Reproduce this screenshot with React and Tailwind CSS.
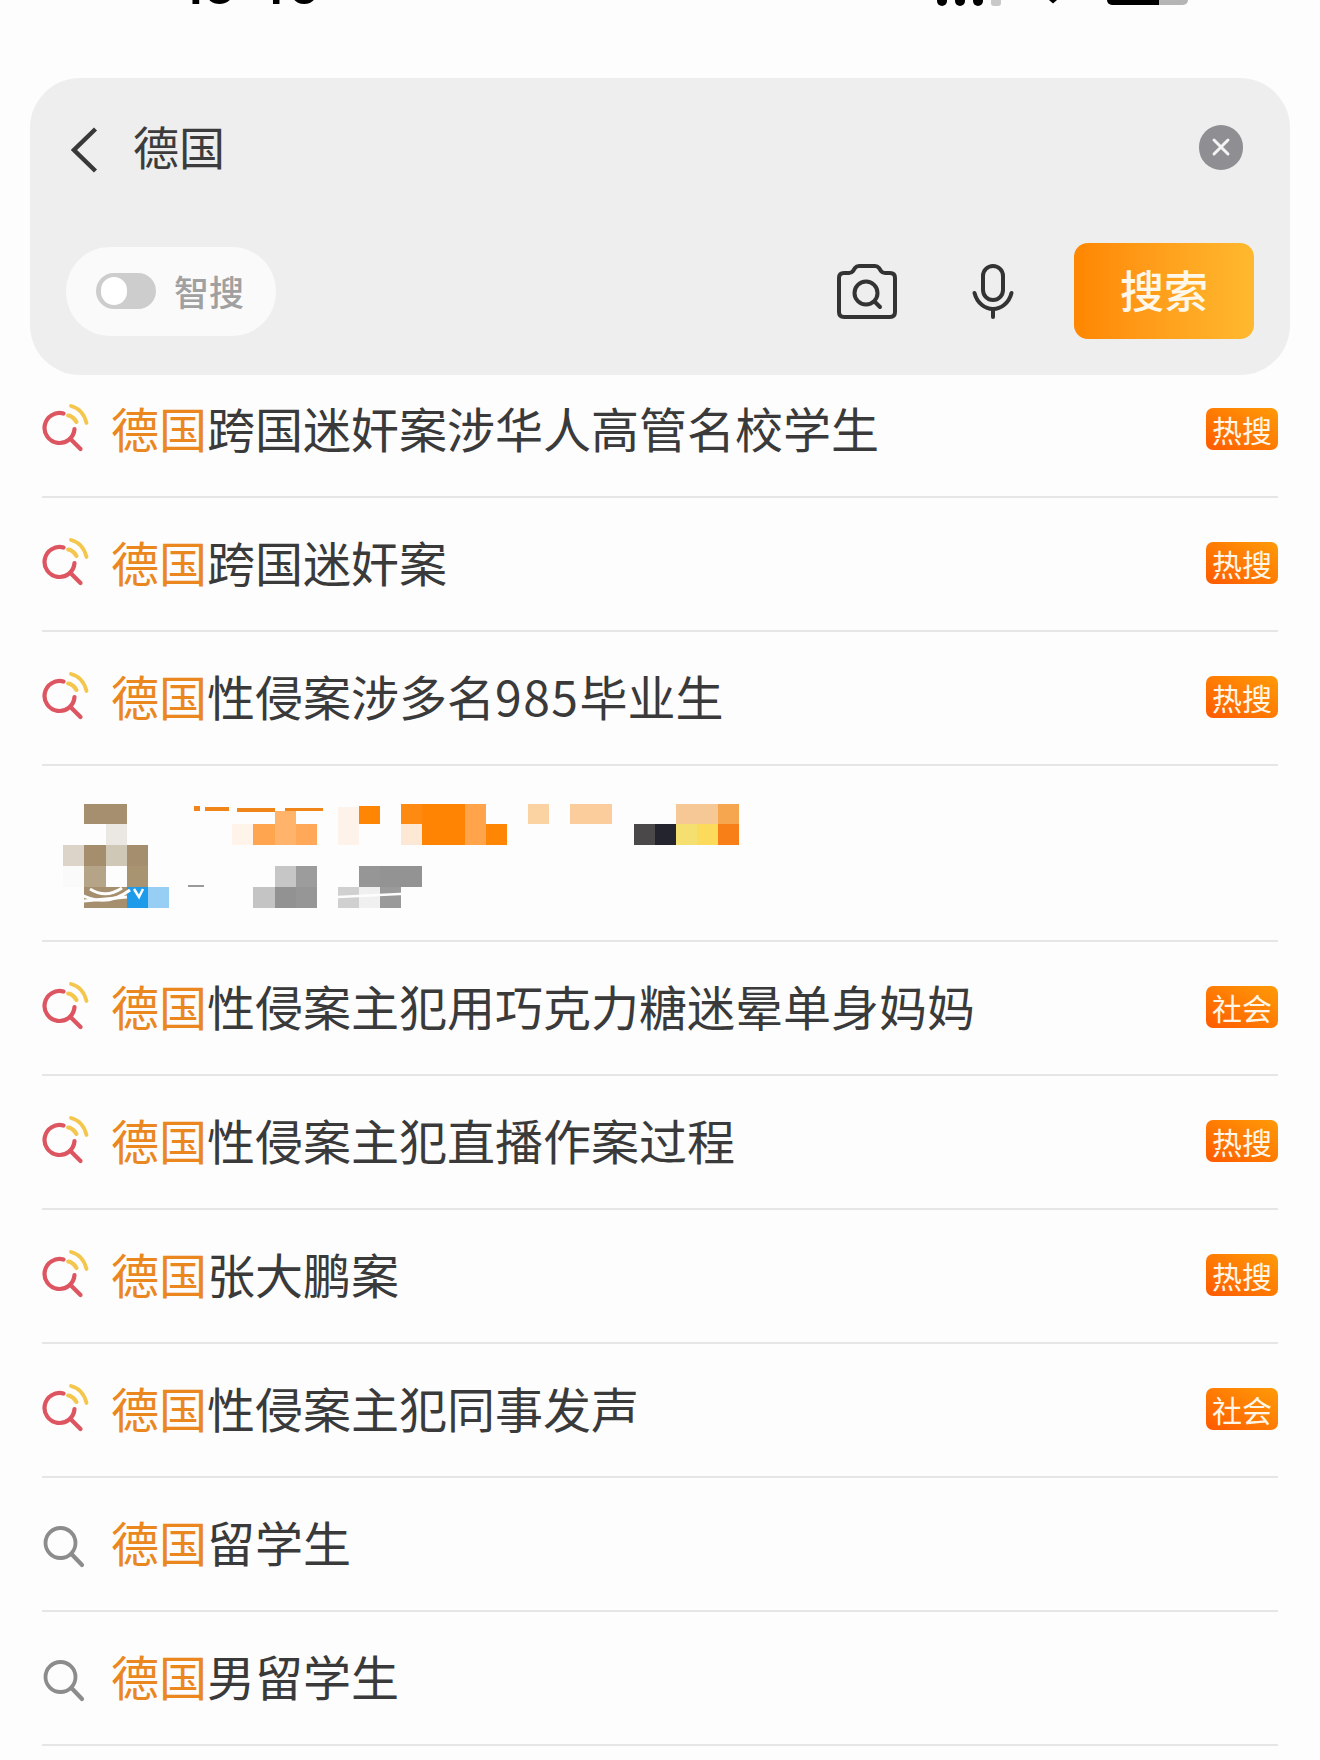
import React from "react";

const mosaic = [
  // avatar
  [84, 803, 43, 20, "#a58f6e"], [106, 823, 21, 21, "#ebe8e3"],
  [63, 844, 21, 21, "#dcd4c8"], [84, 844, 22, 21, "#a48e6e"], [106, 844, 21, 21, "#d0c8b6"], [127, 844, 21, 21, "#a48e6e"],
  [63, 865, 21, 21, "#fbfafa"], [84, 865, 22, 21, "#b5a488"], [127, 865, 21, 21, "#a99471"],
  [84, 886, 43, 21, "#a58f6e"], [127, 886, 21, 21, "#1d9bea"], [148, 886, 21, 21, "#96cff3"],
  // orange text residue
  [194, 805, 6, 5, "#f0861a"], [205, 806, 24, 4, "#f0861a"], [237, 807, 38, 4, "#f0861a"], [285, 807, 38, 3, "#f0861a"],
  [232, 823, 21, 21, "#fff3ea"], [253, 823, 22, 21, "#ffa44f"], [275, 810, 21, 34, "#ffb36b"], [296, 823, 21, 21, "#ffa858"],
  [338, 806, 21, 38, "#fdf3ea"], [359, 805, 21, 18, "#ff8504"],
  [401, 803, 21, 20, "#ff8a12"], [401, 823, 21, 21, "#fde7d5"], [422, 803, 43, 41, "#ff8404"],
  [465, 803, 21, 41, "#ffa44a"], [486, 823, 21, 21, "#ff8504"],
  [528, 803, 21, 20, "#fbd3a3"], [570, 803, 42, 20, "#fccd9c"],
  [634, 823, 21, 21, "#4a4848"], [655, 823, 21, 21, "#24242e"],
  [676, 803, 42, 20, "#f5c896"], [676, 823, 21, 21, "#f5df70"], [697, 823, 21, 21, "#fcda5c"],
  [718, 803, 21, 20, "#f6a64f"], [718, 823, 21, 21, "#f87f17"],
  // grey text
  [253, 886, 22, 21, "#c4c4c4"], [275, 865, 21, 21, "#c6c6c6"], [275, 886, 21, 21, "#929292"],
  [296, 865, 21, 21, "#9c9c9c"], [296, 886, 21, 21, "#969696"],
  [338, 886, 21, 21, "#d0d0d0"], [359, 865, 21, 21, "#969696"], [359, 886, 21, 21, "#f0f0f0"],
  [380, 865, 42, 21, "#939393"], [380, 886, 21, 21, "#9a9a9a"],
  [188, 884, 16, 2, "#9a9a9a"],
];

const rows = [
  { t: "跨国迷奸案涉华人高管名校学生", b: "热搜", first: true },
  { t: "跨国迷奸案", b: "热搜" },
  { t: <>性侵案涉多名<span className="tracking-[1.5px]">985</span>毕业生</>, b: "热搜" },
  { blur: true },
  { t: "性侵案主犯用巧克力糖迷晕单身妈妈", b: "社会" },
  { t: "性侵案主犯直播作案过程", b: "热搜" },
  { t: "张大鹏案", b: "热搜" },
  { t: "性侵案主犯同事发声", b: "社会" },
  { t: "留学生" },
  { t: "男留学生" },
];

function HotIcon() {
  return (
    <svg width="48" height="56" viewBox="0 0 48 56" fill="none" className="shrink-0">
      <path d="M27 13.5 Q33 15.5 35 21 L29 14 Z" fill="#fbe3b8" stroke="#fbe3b8" strokeWidth="4" />
      <path d="M21.5 11.5 A15 15 0 1 0 32.5 27" stroke="#dd5560" strokeWidth="4.2" strokeLinecap="round" />
      <path d="M28.5 37 L38.5 47" stroke="#dd5560" strokeWidth="4.2" strokeLinecap="round" />
      <path d="M29 4 Q41 7 44.5 21" stroke="#f4c64c" strokeWidth="3.8" strokeLinecap="round" />
      <path d="M26 13.5 Q31 14 34.5 20" stroke="#f4c64c" strokeWidth="3.8" strokeLinecap="round" />
    </svg>
  );
}

function GrayIcon() {
  return (
    <svg width="48" height="56" viewBox="0 0 48 56" fill="none" className="shrink-0">
      <circle cx="18.5" cy="27" r="15" stroke="#8c8c8c" strokeWidth="3.8" />
      <path d="M29.5 38 L40 49" stroke="#8c8c8c" strokeWidth="4.2" strokeLinecap="round" />
    </svg>
  );
}

function Badge({ label }) {
  return (
    <div className="mb-[2px] ml-auto flex h-[42px] w-[72px] items-center justify-center rounded-[7px] bg-gradient-to-tr from-[#ff5800] to-[#ff9a08] text-[30px] leading-none text-[#fff6e8]">
      {label}
    </div>
  );
}

function Row({ t, b, first }) {
  return (
    <div className={`flex items-center border-b-2 border-[#e6e6e6] ${first ? "h-[123px] pb-[12px]" : "h-[134px]"}`}>
      {b ? <HotIcon /> : <GrayIcon />}
      <div className="mb-[6px] ml-[21px] whitespace-nowrap text-[48px] leading-none text-[#3a3a3a]">
        <span className="text-[#ea871e]">德国</span>
        {t}
      </div>
      {b && <Badge label={b} />}
    </div>
  );
}

export default function App() {
  return (
    <div className="h-[1760px] w-[1320px] overflow-hidden bg-[#fdfdfd] font-['Noto_Sans_CJK_SC','Liberation_Sans',sans-serif]">
      {/* status bar, cut by the top edge */}
      <div className="flex h-[78px] items-start">
        <div className="ml-[181px] h-[6px] w-[153px] overflow-hidden">
          <div className="mt-[-40px] font-['Inter',sans-serif] text-[52px] font-semibold leading-[52px] text-black">15:40</div>
        </div>
        <div className="ml-[603px] flex gap-[8px]">
          <div className="h-[6px] w-[10px] rounded-b-full bg-black" />
          <div className="h-[6px] w-[10px] rounded-b-full bg-black" />
          <div className="h-[6px] w-[10px] rounded-b-full bg-black" />
          <div className="h-[6px] w-[10px] rounded-b-[3px] bg-[#c8c8c8]" />
        </div>
        <svg width="8" height="4" viewBox="0 0 8 4" className="ml-[48px]"><path d="M0 0 H8 L4 3.5 Z" fill="#000" /></svg>
        <div className="ml-[50px] flex h-[5px] w-[81px] overflow-hidden rounded-b-[12px]">
          <div className="w-[52px] bg-black" />
          <div className="w-[29px] bg-[#b5b5b5]" />
        </div>
      </div>

      {/* search panel */}
      <div className="mx-[30px] h-[297px] rounded-[50px] bg-[#eeeeee]">
        <div className="flex h-[140px] items-center pl-[41px] pr-[47px]">
          <svg width="27" height="46" viewBox="0 0 27 46" fill="none" className="mt-[4px] shrink-0">
            <path d="M24.5 2 L3 23 L24.5 44" stroke="#383838" strokeWidth="4.4" />
          </svg>
          <div className="mb-[6px] ml-[35px] text-[46px] leading-none text-[#3c3c3c]">德国</div>
          <div className="mb-[2px] ml-auto flex h-[45px] w-[44px] items-center justify-center rounded-full bg-[#8e8e93]">
            <svg width="22" height="22" viewBox="0 0 22 22" fill="none">
              <path d="M4 4 L18 18 M18 4 L4 18" stroke="#f4f4f4" strokeWidth="3" strokeLinecap="round" />
            </svg>
          </div>
        </div>
        <div className="mt-[25px] flex h-[96px] items-center pl-[36px] pr-[36px]">
          <div className="flex h-[89px] w-[210px] items-center rounded-[44px] bg-[#fafafa] pl-[30px]">
            <div className="flex h-[36px] w-[60px] items-center rounded-full bg-[#cdcdcd] pl-[5px]">
              <div className="h-[28px] w-[26px] rounded-full bg-white" />
            </div>
            <div className="mb-[2px] ml-[18px] whitespace-nowrap text-[35px] font-medium leading-none text-[#a0a0a0]">智搜</div>
          </div>
          <svg width="60" height="55" viewBox="0 0 60 55" fill="none" className="ml-auto shrink-0">
            <path d="M7 9 H12 Q14.5 9 16 7 L18 4 Q19.5 2 22 2 H38 Q40.5 2 42 4 L44 7 Q45.5 9 48 9 H53 Q58 9 58 14 V48 Q58 53 53 53 H7 Q2 53 2 48 V14 Q2 9 7 9 Z" stroke="#333333" strokeWidth="4" />
            <circle cx="29" cy="29" r="11.5" stroke="#333333" strokeWidth="4" />
            <path d="M37.5 37.5 L43 43" stroke="#333333" strokeWidth="4" strokeLinecap="round" />
          </svg>
          <svg width="42" height="55" viewBox="0 0 42 55" fill="none" className="ml-[75px] shrink-0">
            <rect x="11" y="2" width="20" height="34" rx="10" stroke="#333333" strokeWidth="4" />
            <path d="M2.5 29 C5 39 13 45 21 45 C29 45 37 39 39.5 29" stroke="#333333" strokeWidth="4" strokeLinecap="round" />
            <path d="M21 45 V53" stroke="#333333" strokeWidth="4" strokeLinecap="round" />
          </svg>
          <div className="ml-[60px] flex h-[96px] w-[180px] items-center justify-center rounded-[14px] bg-gradient-to-r from-[#ff8600] to-[#ffb92e] pb-[4px] text-[44px] font-medium leading-none text-[#fff8ea]">
            搜索
          </div>
        </div>
      </div>

      {/* suggestions */}
      <div className="px-[42px]">
        {rows.map((r, i) =>
          r.blur ? (
            <div key={i} className="flex h-[176px] items-center border-b-2 border-[#e6e6e6] pl-[21px] pt-[5px]">
              <svg width="680" height="104" viewBox="63 803 680 104">
                {mosaic.map((m, j) => (
                  <rect key={j} x={m[0]} y={m[1]} width={m[2]} height={m[3]} fill={m[4]} />
                ))}
                <path d="M78 892 Q105 908 130 889 M90 888 Q106 898 122 887" stroke="#fdfdfd" strokeWidth="3" fill="none" />
                <path d="M84 900 L127 896" stroke="#fdfdfd" strokeWidth="3" />
                <path d="M134 888 L139 896 L143 888" stroke="#fdfdfd" strokeWidth="2.5" fill="none" />
                <path d="M338 896 L420 892" stroke="#fdfdfd" strokeWidth="2.5" />
              </svg>
            </div>
          ) : (
            <Row key={i} {...r} />
          )
        )}
      </div>
    </div>
  );
}
